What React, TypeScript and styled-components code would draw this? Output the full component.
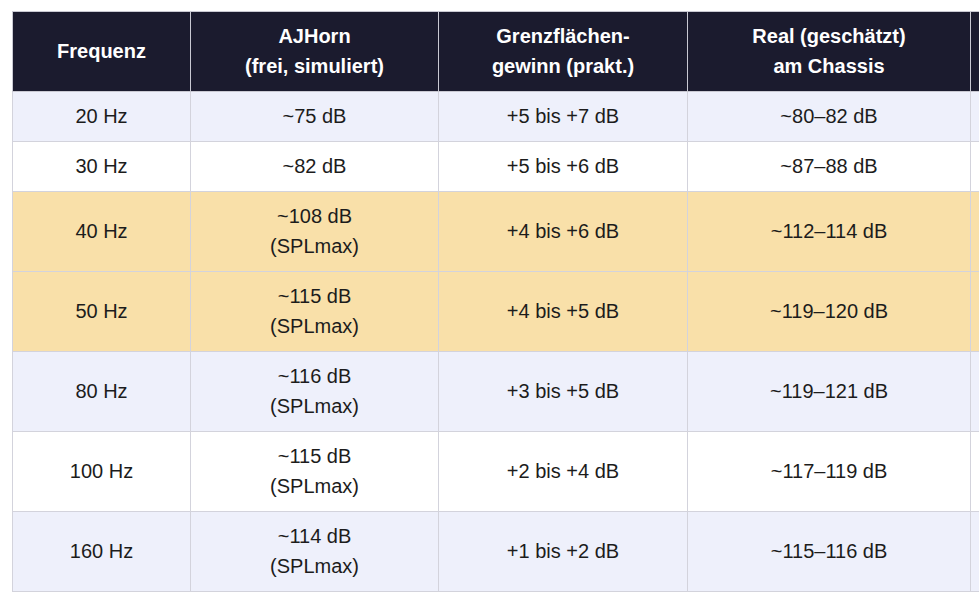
import React from "react";
import styled, { createGlobalStyle } from "styled-components";

const GlobalStyle = createGlobalStyle`
  html, body {
    margin: 0;
    padding: 0;
    background: #ffffff;
  }
  body {
    font-family: "Liberation Sans", Arial, Helvetica, sans-serif;
    color: #1c1c1c;
  }
`;

const Page = styled.div`
  width: 979px;
  height: 602px;
  overflow: hidden;
  box-sizing: border-box;
  padding: 11px 0 0 12px;
`;

const Table = styled.table<{ $w: number }>`
  width: ${(p) => p.$w}px;
  border-collapse: collapse;
  table-layout: fixed;
  font-size: 20px;
  line-height: 30px;
`;

const HeadCell = styled.th`
  background: #1b1b2e;
  color: #ffffff;
  font-weight: 700;
  text-align: center;
  vertical-align: middle;
  padding: 9px 6px 10px;
  border: 1px solid #c9c9d2;
  height: 60px;
`;

const Row = styled.tr<{ $tone: "lav" | "white" | "gold" }>`
  background: ${(p) =>
    p.$tone === "gold" ? "#f9e0a9" : p.$tone === "lav" ? "#eef0fb" : "#ffffff"};
`;

const Cell = styled.td`
  text-align: center;
  vertical-align: middle;
  padding: 9px 6px 10px;
  border: 1px solid #d3d3dc;
`;

const columns = [
  { w: 178, label: ["Frequenz"] },
  { w: 248, label: ["AJHorn", "(frei, simuliert)"] },
  { w: 249, label: ["Grenzflächen-", "gewinn (prakt.)"] },
  { w: 283, label: ["Real (geschätzt)", "am Chassis"] },
  { w: 220, label: [""] },
];

const tableWidth = columns.reduce((s, c) => s + c.w, 0);

type Entry = {
  freq: string;
  horn: string[];
  gain: string;
  real: string;
  tone: "lav" | "white" | "gold";
};

const rows: Entry[] = [
  { freq: "20 Hz", horn: ["~75 dB"], gain: "+5 bis +7 dB", real: "~80–82 dB", tone: "lav" },
  { freq: "30 Hz", horn: ["~82 dB"], gain: "+5 bis +6 dB", real: "~87–88 dB", tone: "white" },
  { freq: "40 Hz", horn: ["~108 dB", "(SPLmax)"], gain: "+4 bis +6 dB", real: "~112–114 dB", tone: "gold" },
  { freq: "50 Hz", horn: ["~115 dB", "(SPLmax)"], gain: "+4 bis +5 dB", real: "~119–120 dB", tone: "gold" },
  { freq: "80 Hz", horn: ["~116 dB", "(SPLmax)"], gain: "+3 bis +5 dB", real: "~119–121 dB", tone: "lav" },
  { freq: "100 Hz", horn: ["~115 dB", "(SPLmax)"], gain: "+2 bis +4 dB", real: "~117–119 dB", tone: "white" },
  { freq: "160 Hz", horn: ["~114 dB", "(SPLmax)"], gain: "+1 bis +2 dB", real: "~115–116 dB", tone: "lav" },
];

function Lines({ parts }: { parts: string[] }) {
  return (
    <>
      {parts.map((t, i) => (
        <React.Fragment key={i}>
          {i > 0 && <br />}
          {t}
        </React.Fragment>
      ))}
    </>
  );
}

export default function App() {
  return (
    <>
      <GlobalStyle />
      <Page>
        <Table $w={tableWidth}>
          <colgroup>
            {columns.map((c, i) => (
              <col key={i} style={{ width: c.w }} />
            ))}
          </colgroup>
          <thead>
            <tr>
              {columns.map((c, i) => (
                <HeadCell key={i}>
                  <Lines parts={c.label} />
                </HeadCell>
              ))}
            </tr>
          </thead>
          <tbody>
            {rows.map((r) => (
              <Row key={r.freq} $tone={r.tone}>
                <Cell>{r.freq}</Cell>
                <Cell>
                  <Lines parts={r.horn} />
                </Cell>
                <Cell>{r.gain}</Cell>
                <Cell>{r.real}</Cell>
                <Cell />
              </Row>
            ))}
          </tbody>
        </Table>
      </Page>
    </>
  );
}
